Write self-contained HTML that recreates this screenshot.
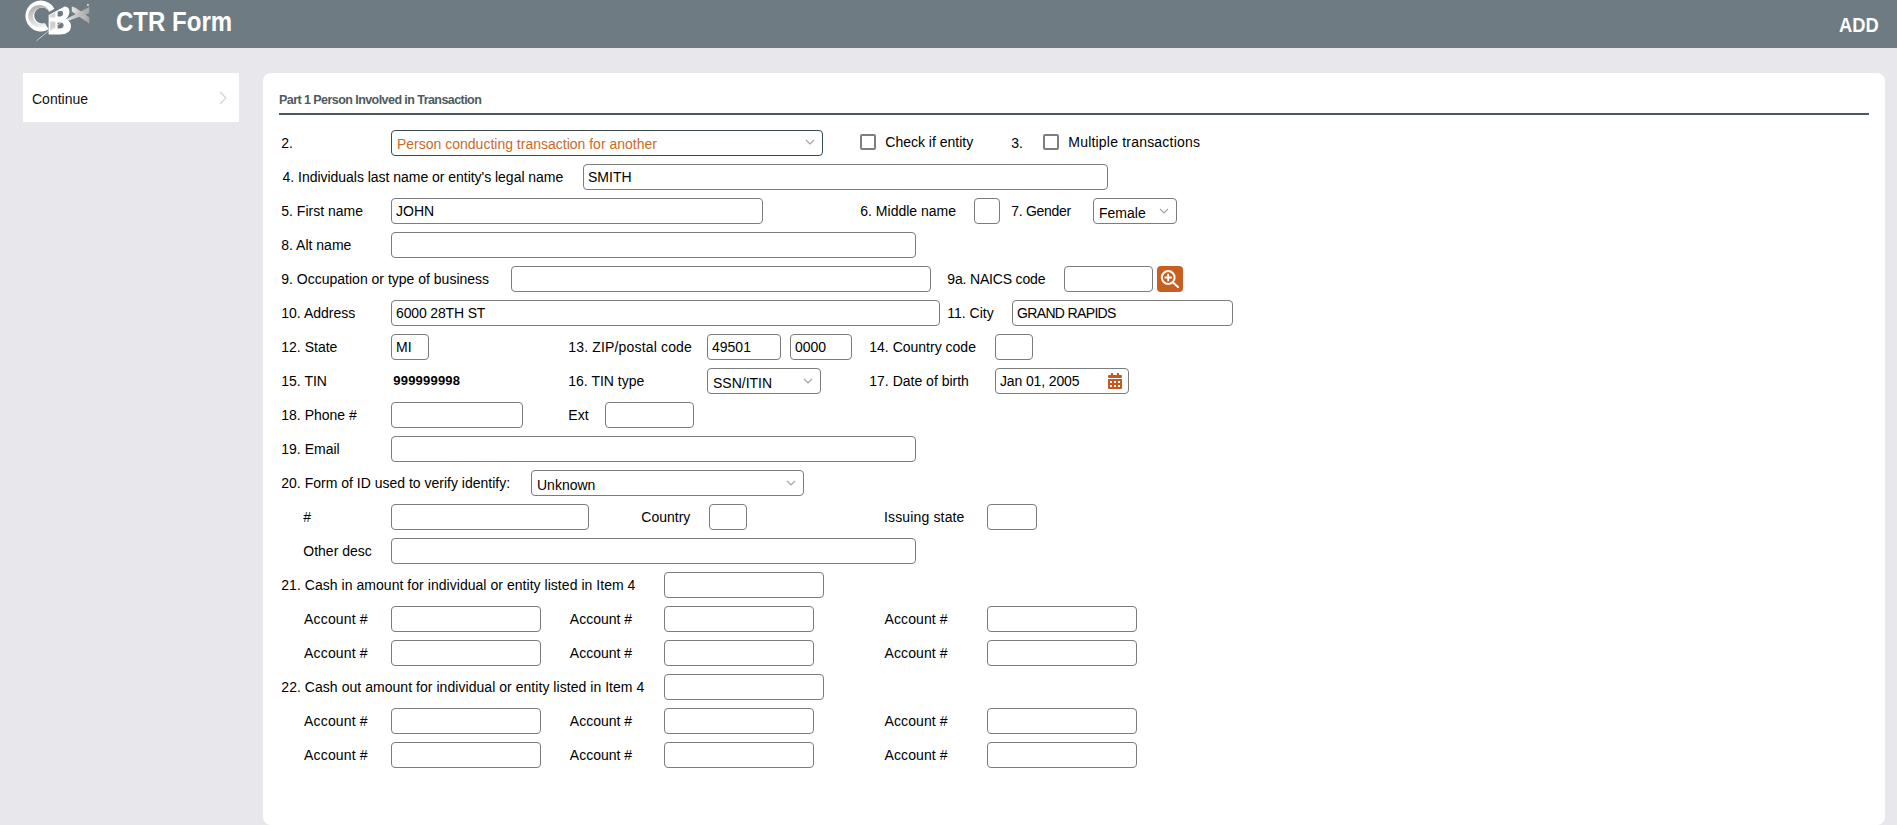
<!DOCTYPE html>
<html><head><meta charset="utf-8"><title>CTR Form</title>
<style>
*{margin:0;padding:0;box-sizing:border-box}
html,body{width:1897px;height:825px;overflow:hidden;background:#e8e7ec;font-family:"Liberation Sans",sans-serif;font-size:14px;color:#1a1a1a}
.hdr{position:absolute;left:0;top:0;width:1897px;height:48px;background:#6e7b82}
.logo{position:absolute}
.title{position:absolute;left:116px;top:6px;font-size:27px;font-weight:bold;color:#fff;line-height:32px;transform:scaleX(0.89);transform-origin:0 0}
.add{position:absolute;left:1839px;top:12px;font-size:20px;font-weight:bold;color:#fff;line-height:26px;transform:scaleX(0.915);transform-origin:0 0}
.side{position:absolute;left:23px;top:73px;width:216px;height:49px;background:#fff}
.side .t{position:absolute;left:9px;top:13px;line-height:26px;color:#111}
.side svg{position:absolute;left:195px;top:18px}
.panel{position:absolute;left:263px;top:73px;width:1622px;height:752px;background:#fff;border-radius:8px}
.ptitle{position:absolute;left:279px;top:92px;font-size:12.5px;font-weight:bold;color:#4e5a60;letter-spacing:-0.56px;line-height:16px}
.uline{position:absolute;left:279px;top:113px;width:1590px;height:2px;background:#4a5a62}
.lbl{position:absolute;line-height:26px;white-space:nowrap;color:#000}
.bold{font-weight:bold;font-size:13px}
.inp,.sel{position:absolute;height:26px;border:1px solid #7c7c7c;border-radius:4px;background:#fff;white-space:nowrap;overflow:hidden}
.inp span{position:absolute;left:4px;top:0;line-height:24px;color:#000}
.sel span{position:absolute;left:5px;top:2px;line-height:24px;color:#000}
.sel1{border-color:#3a4a52}
.sel1 .chev{top:8px}
.sel1 span{color:#cc6a26;top:1px}
.chev{position:absolute;top:9px}
.cb{position:absolute;width:16px;height:16px;border:2px solid #7e7e7e;border-radius:2px;background:#fff}
.btn{position:absolute;width:26px;height:26px;background:#c65f1f;border-radius:4px}
.btn svg{position:absolute;left:0;top:0}
.cal{position:absolute}
</style></head><body>
<div class="hdr"><svg class="logo" width="75" height="45" viewBox="0 0 75 45" style="left:20px;top:0px">
<defs>
<linearGradient id="gb" x1="0" y1="0" x2="0.3" y2="1"><stop offset="0" stop-color="#a9a9a9"/><stop offset="0.6" stop-color="#cfcfcf"/><stop offset="1" stop-color="#ececec"/></linearGradient>
<linearGradient id="gx" x1="0" y1="0" x2="1" y2="0"><stop offset="0" stop-color="#e4e4e4"/><stop offset="1" stop-color="#a4a4a4"/></linearGradient>
<clipPath id="cc"><path d="M34.40 8.70 A15.4 15.4 0 1 0 28.76 29.26 L24.76 23.16 A8.0 8.0 0 1 1 29.30 11.80 Z"/></clipPath>
</defs>
<path d="M34.40 8.70 A15.4 15.4 0 1 0 28.76 29.26 L24.76 23.16 A8.0 8.0 0 1 1 29.30 11.80 Z" fill="#ffffff"/>
<g clip-path="url(#cc)"><path fill-rule="evenodd" fill="url(#gb)" d="M8.2 16.1 A11.2 11.2 0 1 0 30.6 16.1 A11.2 11.2 0 1 0 8.2 16.1 Z M13 16.1 A8 8 0 1 0 29 16.1 A8 8 0 1 0 13 16.1 Z"/></g>
<path d="M51.8 6.5 L55.5 7.8 L69.3 17.3 L69.3 23.5 L51.8 11.6 Z" fill="url(#gx)"/>
<path d="M45.3 19.6 L69.3 7.1 L69.3 13.2 L47 21.2 Z" fill="url(#gx)"/>
<circle cx="67.9" cy="4.9" r="1.1" fill="#d4d4d4"/>
<path fill-rule="evenodd" fill="#ffffff" d="M28.6 15 L44.7 6.5 Q49.6 6.8 49.4 12.2 Q49 16.5 45.6 19 Q51.2 21 51 26.5 Q50.6 34.4 40 34.4 L28.6 34.4 Z M37.6 11.6 L37.6 16.4 L40.5 16.4 Q43.3 15.8 43.1 13 Q42.8 10.6 40.5 10.9 Z M37.6 22.4 L37.6 28.4 L40.5 28.4 Q43.6 28 43.6 25.2 Q43.4 22.3 40.5 22.4 Z"/>
<path d="M29.6 15.2 L35.4 12.2 L35.4 17.6 L29.6 17.6 Z" fill="#d6d6d6"/>
<path d="M30.2 21.4 L35.4 21.4 L35.4 27.8 L30.2 30.4 Z" fill="#cfcfcf"/>
<path d="M16.4 40.9 L28.4 31.1" stroke="#d0d0d0" stroke-width="0.9"/>
<path d="M28.4 31.1 L42.5 21.8" stroke="#e2e2e2" stroke-width="0.8"/>
</svg><div class="title">CTR Form</div><div class="add">ADD</div></div>
<div class="side"><div class="t">Continue</div><svg width="10" height="16" viewBox="0 0 10 16"><path d="M2.2 1 L7.9 7 L2.2 12.8" fill="none" stroke="#d6d5e0" stroke-width="1.4"/></svg></div>
<div class="panel"></div>
<div class="ptitle">Part 1 Person Involved in Transaction</div>
<div class="uline"></div>
<div class="lbl" style="left:281.3px;top:130px">2.</div>
<div class="sel sel1" style="left:391px;top:130px;width:432px"><span>Person conducting transaction for another</span><svg class="chev" width="10" height="6" style="right:7px" viewBox="0 0 10 6"><path d="M1 1 L5 5 L9 1" fill="none" stroke="#a4a4a4" stroke-width="1.2"/></svg></div>
<div class="cb" style="left:860px;top:134px"></div>
<div class="lbl" style="left:885.3px;top:129px">Check if entity</div>
<div class="lbl" style="left:1011.3px;top:130px">3.</div>
<div class="cb" style="left:1043px;top:134px"></div>
<div class="lbl" style="left:1068.3px;top:129px;letter-spacing:0.2px">Multiple transactions</div>
<div class="lbl" style="left:282.6px;top:164px;letter-spacing:-0.03px">4. Individuals last name or entity's legal name</div>
<div class="inp" style="left:583px;top:164px;width:525px"><span>SMITH</span></div>
<div class="lbl" style="left:281.3px;top:198px">5. First name</div>
<div class="inp" style="left:391px;top:198px;width:372px"><span>JOHN</span></div>
<div class="lbl" style="left:860.3px;top:198px">6. Middle name</div>
<div class="inp" style="left:974px;top:198px;width:26px"></div>
<div class="lbl" style="left:1011.3px;top:198px;letter-spacing:-0.3px">7. Gender</div>
<div class="sel" style="left:1093px;top:198px;width:84px"><span>Female</span><svg class="chev" width="10" height="6" style="right:7px" viewBox="0 0 10 6"><path d="M1 1 L5 5 L9 1" fill="none" stroke="#a4a4a4" stroke-width="1.2"/></svg></div>
<div class="lbl" style="left:281.3px;top:232px">8. Alt name</div>
<div class="inp" style="left:391px;top:232px;width:525px"></div>
<div class="lbl" style="left:281.3px;top:266px">9. Occupation or type of business</div>
<div class="inp" style="left:511px;top:266px;width:420px"></div>
<div class="lbl" style="left:947.3px;top:266px;letter-spacing:-0.17px">9a. NAICS code</div>
<div class="inp" style="left:1064px;top:266px;width:89px"></div>
<div class="btn" style="left:1157px;top:266px"><svg width="26" height="26" viewBox="0 0 26 26"><circle cx="11.2" cy="11.5" r="6.4" fill="none" stroke="#fff" stroke-width="2"/><path d="M7.5 11.5 H14.9 M11.2 7.8 V15.2" stroke="#fff" stroke-width="1.8"/><path d="M15.8 16.2 L21 21" stroke="#fff" stroke-width="2" stroke-linecap="round"/></svg></div>
<div class="lbl" style="left:281.3px;top:300px">10. Address</div>
<div class="inp" style="left:391px;top:300px;width:549px"><span style="letter-spacing:-0.15px">6000 28TH ST</span></div>
<div class="lbl" style="left:947.3px;top:300px">11. City</div>
<div class="inp" style="left:1012px;top:300px;width:221px"><span style="letter-spacing:-0.65px">GRAND RAPIDS</span></div>
<div class="lbl" style="left:281.3px;top:334px">12. State</div>
<div class="inp" style="left:391px;top:334px;width:38px"><span>MI</span></div>
<div class="lbl" style="left:568.3px;top:334px;letter-spacing:0.16px">13. ZIP/postal code</div>
<div class="inp" style="left:707px;top:334px;width:74px"><span>49501</span></div>
<div class="inp" style="left:790px;top:334px;width:62px"><span>0000</span></div>
<div class="lbl" style="left:869.3px;top:334px">14. Country code</div>
<div class="inp" style="left:995px;top:334px;width:38px"></div>
<div class="lbl" style="left:281.3px;top:368px">15. TIN</div>
<div class="lbl bold" style="left:393.3px;top:368px;letter-spacing:0.2px">999999998</div>
<div class="lbl" style="left:568.3px;top:368px">16. TIN type</div>
<div class="sel" style="left:707px;top:368px;width:114px"><span>SSN/ITIN</span><svg class="chev" width="10" height="6" style="right:7px" viewBox="0 0 10 6"><path d="M1 1 L5 5 L9 1" fill="none" stroke="#a4a4a4" stroke-width="1.2"/></svg></div>
<div class="lbl" style="left:869.3px;top:368px">17. Date of birth</div>
<div class="inp" style="left:995px;top:368px;width:134px"><span style="letter-spacing:-0.13px">Jan 01, 2005</span></div>
<svg class="cal" style="left:1108px;top:373px" width="14" height="16" viewBox="0 0 14 16"><rect x="3" y="0" width="2" height="3" fill="#c65a1e"/><rect x="9" y="0" width="2" height="3" fill="#c65a1e"/><rect x="0" y="2" width="14" height="3" rx="1" fill="#c65a1e"/><path d="M0 6 H14 V15 Q14 16 13 16 H1 Q0 16 0 15 Z" fill="#c65a1e"/><g fill="#fff"><rect x="2" y="8" width="2" height="2"/><rect x="6" y="8" width="2" height="2"/><rect x="10" y="8" width="2" height="2"/><rect x="2" y="12" width="2" height="2"/><rect x="6" y="12" width="2" height="2"/><rect x="10" y="12" width="2" height="2"/></g></svg>
<div class="lbl" style="left:281.3px;top:402px">18. Phone #</div>
<div class="inp" style="left:391px;top:402px;width:132px"></div>
<div class="lbl" style="left:568.3px;top:402px">Ext</div>
<div class="inp" style="left:605px;top:402px;width:89px"></div>
<div class="lbl" style="left:281.3px;top:436px">19. Email</div>
<div class="inp" style="left:391px;top:436px;width:525px"></div>
<div class="lbl" style="left:281.3px;top:470px">20. Form of ID used to verify identify:</div>
<div class="sel" style="left:531px;top:470px;width:273px"><span>Unknown</span><svg class="chev" width="10" height="6" style="right:7px" viewBox="0 0 10 6"><path d="M1 1 L5 5 L9 1" fill="none" stroke="#a4a4a4" stroke-width="1.2"/></svg></div>
<div class="lbl" style="left:303.3px;top:504px">#</div>
<div class="inp" style="left:391px;top:504px;width:198px"></div>
<div class="lbl" style="left:641.3px;top:504px">Country</div>
<div class="inp" style="left:709px;top:504px;width:38px"></div>
<div class="lbl" style="left:884px;top:504px;letter-spacing:0.15px">Issuing state</div>
<div class="inp" style="left:987px;top:504px;width:50px"></div>
<div class="lbl" style="left:303.3px;top:538px">Other desc</div>
<div class="inp" style="left:391px;top:538px;width:525px"></div>
<div class="lbl" style="left:281.3px;top:572px;letter-spacing:0.04px">21. Cash in amount for individual or entity listed in Item 4</div>
<div class="inp" style="left:664px;top:572px;width:160px"></div>
<div class="lbl" style="left:304.1px;top:606px;letter-spacing:0.15px">Account #</div>
<div class="inp" style="left:391px;top:606px;width:150px"></div>
<div class="lbl" style="left:569.8px;top:606px">Account #</div>
<div class="inp" style="left:664px;top:606px;width:150px"></div>
<div class="lbl" style="left:884.5px;top:606px;letter-spacing:0.1px">Account #</div>
<div class="inp" style="left:987px;top:606px;width:150px"></div>
<div class="lbl" style="left:304.1px;top:640px;letter-spacing:0.15px">Account #</div>
<div class="inp" style="left:391px;top:640px;width:150px"></div>
<div class="lbl" style="left:569.8px;top:640px">Account #</div>
<div class="inp" style="left:664px;top:640px;width:150px"></div>
<div class="lbl" style="left:884.5px;top:640px;letter-spacing:0.1px">Account #</div>
<div class="inp" style="left:987px;top:640px;width:150px"></div>
<div class="lbl" style="left:281.3px;top:674px;letter-spacing:0.045px">22. Cash out amount for individual or entity listed in Item 4</div>
<div class="inp" style="left:664px;top:674px;width:160px"></div>
<div class="lbl" style="left:304.1px;top:708px;letter-spacing:0.15px">Account #</div>
<div class="inp" style="left:391px;top:708px;width:150px"></div>
<div class="lbl" style="left:569.8px;top:708px">Account #</div>
<div class="inp" style="left:664px;top:708px;width:150px"></div>
<div class="lbl" style="left:884.5px;top:708px;letter-spacing:0.1px">Account #</div>
<div class="inp" style="left:987px;top:708px;width:150px"></div>
<div class="lbl" style="left:304.1px;top:742px;letter-spacing:0.15px">Account #</div>
<div class="inp" style="left:391px;top:742px;width:150px"></div>
<div class="lbl" style="left:569.8px;top:742px">Account #</div>
<div class="inp" style="left:664px;top:742px;width:150px"></div>
<div class="lbl" style="left:884.5px;top:742px;letter-spacing:0.1px">Account #</div>
<div class="inp" style="left:987px;top:742px;width:150px"></div>
</body></html>
